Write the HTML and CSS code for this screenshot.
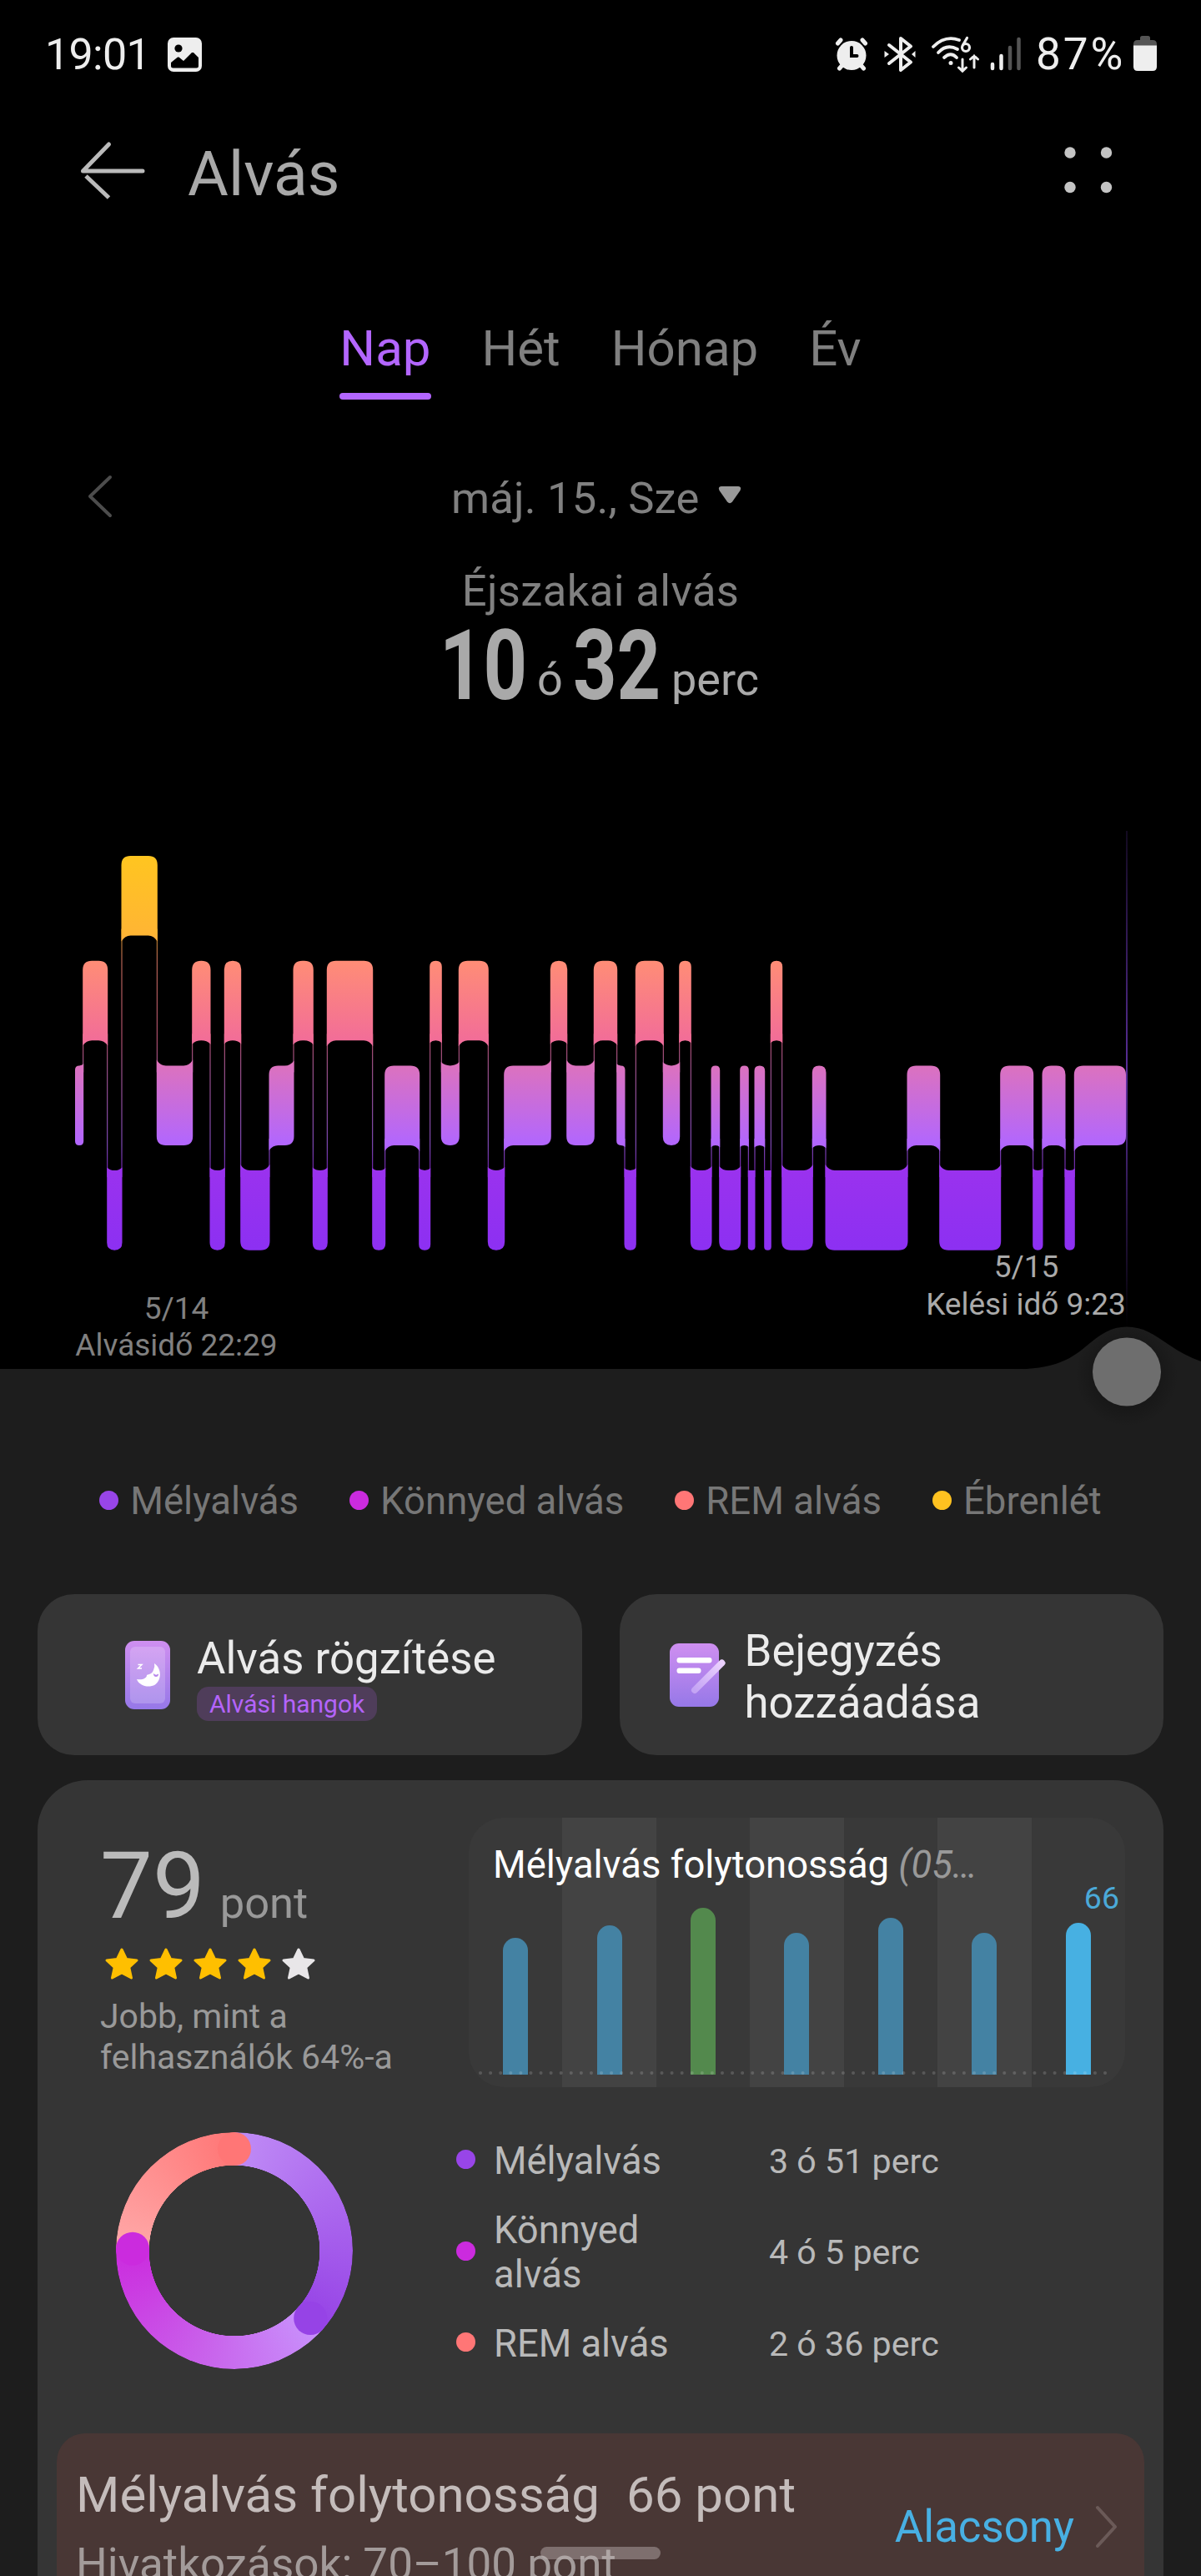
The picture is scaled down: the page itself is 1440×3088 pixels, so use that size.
FILE: index.html
```html
<!DOCTYPE html>
<html lang="hu">
<head>
  <meta charset="UTF-8" />
  <meta name="viewport" content="width=device-width, initial-scale=1.0" />
  <title>Alvás</title>
  <link rel="stylesheet" href="styles.css">
</head>
<body>
  <div class="screen">
    <div class="status-bar">
      <span class="clock">19:01</span>
      <svg class="icon-picture" width="41" height="41" viewBox="0 0 41 41">
        <rect width="41" height="41" rx="7" fill="#eee" />
        <circle cx="13" cy="13" r="4.6" fill="#000" />
        <path d="M4 30 L12 23.5 L13.5 23.5 L19 28 L29 18 L31 18 L37 24 V34 Q37 36.500 34.500 36.500 H6.500 Q4 36.500 4 34 Z" fill="#000" />
      </svg>
      <svg class="status-icons" width="226" height="44" viewBox="0 0 226 44">
        <!-- alarm -->
        <g stroke="#eee" fill="none" stroke-linecap="round" stroke-width="5">
          <circle cx="20" cy="23.500" r="17.500" fill="#eee" stroke="none" />
          <path d="M3.500 9 L7 5 M36.500 9 L33 5 M5.500 39 L9 35 M34.500 39 L31 35" />
          <path d="M20 14 V24 H26.500" stroke="#000" stroke-width="4" />
        </g>
        <!-- bluetooth -->
        <g stroke="#eee" fill="none" stroke-width="4" stroke-linecap="round" stroke-linejoin="round">
          <path d="M65 11 L91 31.500 L79 41 V3 L91 12.500 L65 33" />
          <path d="M59.500 18 L65 22 L59.500 26 Z M96.500 18 L92 22 L96.500 26 Z" fill="#eee" stroke="none" />
        </g>
        <!-- wifi 6 -->
        <g stroke="#eee" fill="none" stroke-width="3.800" stroke-linecap="round">
          <path d="M118 13 Q132 -1 149 5" />
          <path d="M124 20 Q134 9 147 16" />
          <path d="M131 26 Q139 18.500 146 26" />
          <circle cx="139" cy="32.500" r="2.500" fill="#eee" stroke="none" />
          <circle cx="157" cy="14" r="4.500" stroke-width="3.200" />
          <path d="M153.500 11 L158.500 2.500" stroke-width="3.200" />
          <path d="M153 28 V42 M148.500 38 L153 42.300 L157.500 38 M167 38 V24 M162.500 28 L167 24 L171.500 28" stroke-width="3" />
        </g>
        <!-- signal -->
        <g stroke-width="4.500" stroke-linecap="round">
          <path d="M189 34 V39 M199.500 24 V39" stroke="#eee" />
          <path d="M210 14 V39 M220.500 4 V39" stroke="#555" />
        </g>
      </svg>
      <span class="battery-text">87%</span>
      <svg width="28" height="42" viewBox="0 0 28 42">
        <path d="M8 2.500 Q8 0 10.500 0 H17.500 Q20 0 20 2.500 V5 H23 Q28 5 28 10 V12 H0 V10 Q0 5 5 5 H8 Z" fill="#555" />
        <path d="M0 11.500 H28 V37 Q28 42 23 42 H5 Q0 42 0 37 Z" fill="#eee" />
      </svg>
    </div>

    <div class="header">
      <svg class="back" width="80" height="72" viewBox="0 0 80 72" fill="none" stroke="#bbb" stroke-width="5" stroke-linecap="round">
        <path d="M76 36 H4.500 L35.500 4" stroke-linejoin="round" />
        <path d="M8 42 L35.500 68" stroke-linecap="butt" />
      </svg>
      <h1>Alvás</h1>
      <svg class="more" width="58" height="56" viewBox="0 0 58 56" fill="#c4c4c4">
        <circle cx="7" cy="7" r="6.700" />
        <circle cx="50.500" cy="7" r="6.700" />
        <circle cx="7" cy="48.500" r="6.700" />
        <circle cx="50.500" cy="48.500" r="6.700" />
      </svg>
    </div>

    <div class="tabs">
      <span class="tab active">Nap</span>
      <span class="tab">Hét</span>
      <span class="tab">Hónap</span>
      <span class="tab">Év</span>
    </div>

    <div class="date-row">
      <svg class="prev" width="30" height="52" viewBox="0 0 30 52" fill="none" stroke="#4c4c4c" stroke-width="4" stroke-linecap="round" stroke-linejoin="round">
        <path d="M27 3 L3 26 L27 49" />
      </svg>
      <span>máj. 15., Sze</span>
      <svg class="caret" width="28" height="21" viewBox="0 0 28 21">
        <path d="M4 0 H24 Q28.500 0.500 26.500 5 L17 18.500 Q14 22 11 18.500 L1.500 5 Q-0.500 0.500 4 0 Z" fill="#9a9a9a" />
      </svg>
    </div>

    <div class="summary-label">Éjszakai alvás</div>
    <div class="summary">
      <span class="num">10</span>
      <span class="unit">ó</span>
      <span class="num">32</span>
      <span class="unit">perc</span>
    </div>

    <svg class="sleep-chart" width="1440" height="784" viewBox="0 857 1440 784">
      <defs>
        <linearGradient id="stages" gradientUnits="userSpaceOnUse" x1="0" y1="1026" x2="0" y2="1499">
          <stop offset="0" stop-color="#ffc520" />
          <stop offset="0.2" stop-color="#ffb534" />
          <stop offset="0.266" stop-color="#ff8d76" />
          <stop offset="0.467" stop-color="#f26d98" />
          <stop offset="0.531" stop-color="#dc72be" />
          <stop offset="0.733" stop-color="#b166ff" />
          <stop offset="0.797" stop-color="#9a32ee" />
          <stop offset="1" stop-color="#8c30f2" />
        </linearGradient>
        <linearGradient id="marker" x1="0" y1="0" x2="0" y2="1">
          <stop offset="0" stop-color="#7a3fd0" stop-opacity="0.15" />
          <stop offset="0.5" stop-color="#7a3fd0" stop-opacity="0.75" />
          <stop offset="1" stop-color="#7a3fd0" stop-opacity="0" />
        </linearGradient>
        <radialGradient id="knobShadow">
          <stop offset="0.6" stop-color="#000" stop-opacity="0.2" />
          <stop offset="1" stop-color="#000" stop-opacity="0" />
        </radialGradient>
      </defs>
      <g id="bars" fill="url(#stages)"></g>
      <rect x="1350" y="996" width="2" height="594" fill="url(#marker)" />
      <g class="chart-label start" text-anchor="middle">
        <text x="211.500" y="1581">5/14</text>
        <text x="211.500" y="1625">Alvásidő 22:29</text>
      </g>
      <g class="chart-label end" text-anchor="middle">
        <text x="1230.500" y="1531">5/15</text>
        <text x="1230" y="1576">Kelési idő 9:23</text>
      </g>
      <path d="M1215 1641.500 C1252 1641 1277 1636 1302 1614 C1320 1599 1332 1590.500 1351 1590.500 C1371 1590.500 1384 1600 1400 1611 Q1420 1625 1440 1632 V1642 H1215 Z" fill="#1d1d1d" />
      <circle cx="1351" cy="1648" r="62" fill="url(#knobShadow)" />
      <circle cx="1351" cy="1644.500" r="41" fill="#6e6e6e" />
    </svg>

    <div class="sheet">
      <div class="legend">
        <span class="legend-item"><i class="dot deep"></i>Mélyalvás</span>
        <span class="legend-item"><i class="dot light"></i>Könnyed alvás</span>
        <span class="legend-item"><i class="dot rem"></i>REM alvás</span>
        <span class="legend-item"><i class="dot awake"></i>Ébrenlét</span>
      </div>

      <div class="actions">
        <div class="action record">
          <svg width="54" height="82" viewBox="0 0 54 82">
            <defs>
              <linearGradient id="lilac" x1="0" y1="0" x2="0" y2="1">
                <stop offset="0" stop-color="#cf8ff0" />
                <stop offset="1" stop-color="#9678e8" />
              </linearGradient>
            </defs>
            <rect width="54" height="82" rx="11" fill="url(#lilac)" />
            <rect x="6" y="7" width="42" height="68" rx="6" fill="#fff" fill-opacity="0.2" />
            <path d="M35 27 C44 33 44 47 36 52.500 C28 57 17 54 14 46 C21 47 26 45 26 41 C29 40 33 39 34 35 Q36 31 35 27 Z" fill="#fff" />
            <path d="M34 39 Q37 42 40 39.500 Q40 43 37 43 Q34 43 34 39 Z" fill="#b583ec" />
            <path d="M15.500 28.500 H20 L15.500 33 H20" fill="none" stroke="#fff" stroke-width="1.500" />
          </svg>
          <div class="action-text">
            <span>Alvás rögzítése</span>
            <span class="tag">Alvási hangok</span>
          </div>
        </div>
        <div class="action note">
          <svg width="68" height="76" viewBox="0 0 68 76">
            <defs>
              <linearGradient id="pen" x1="1" y1="0" x2="0" y2="1">
                <stop offset="0" stop-color="#ecd2ff" />
                <stop offset="1" stop-color="#c4a4f4" />
              </linearGradient>
            </defs>
            <rect width="59" height="76" rx="11" fill="url(#lilac)" />
            <rect x="8.500" y="17" width="42" height="6.500" rx="3" fill="#fff" />
            <rect x="8.500" y="29.500" width="29" height="6.500" rx="3" fill="#fff" />
            <path d="M30 56 L62.500 23.500" stroke="url(#pen)" stroke-width="8" stroke-linecap="round" />
          </svg>
          <div class="action-text">Bejegyzés<br>hozzáadása</div>
        </div>
      </div>

      <div class="card">
        <div class="card-row">
          <div class="score">
            <div class="score-value">79 <small>pont</small></div>
            <div class="stars" id="stars"></div>
            <p>Jobb, mint a<br>felhasználók 64%-a</p>
          </div>
          <div class="trend">
            <div class="trend-title">Mélyalvás folytonosság <em>(05…</em></div>
            <span class="trend-value">66</span>
            <div class="trend-cols" id="trend"></div>
            <svg class="trend-axis" width="764" height="4" viewBox="0 0 764 4">
              <path d="M2 2 H762" stroke="#fff" stroke-opacity="0.16" stroke-width="4" stroke-linecap="round" stroke-dasharray="0.1 11.980" />
            </svg>
          </div>
        </div>

        <div class="card-row stages-row">
          <div class="ring">
            <svg width="284" height="284" viewBox="0 0 284 284">
              <circle cx="233.200" cy="223" r="20" fill="#9643e6" />
              <circle cx="20" cy="139.700" r="20" fill="#cb2bde" />
              <circle cx="142" cy="20" r="20" fill="#ff7676" />
            </svg>
          </div>
          <div class="stage-list">
            <div class="stage"><i class="dot deep"></i><span class="name">Mélyalvás</span><span class="time">3 ó 51 perc</span></div>
            <div class="stage"><i class="dot light"></i><span class="name">Könnyed alvás</span><span class="time">4 ó 5 perc</span></div>
            <div class="stage"><i class="dot rem"></i><span class="name">REM alvás</span><span class="time">2 ó 36 perc</span></div>
          </div>
        </div>

        <div class="notice">
          <div class="notice-text">
            <div class="notice-title">Mélyalvás folytonosság<span>66 pont</span></div>
            <div class="notice-sub">Hivatkozások: 70–100 pont</div>
          </div>
          <div class="notice-level">
            Alacsony
            <svg width="28" height="52" viewBox="0 0 28 52" fill="none" stroke="#6b5a58" stroke-width="4" stroke-linecap="round" stroke-linejoin="round">
              <path d="M3 3 L24 26 L3 49" />
            </svg>
          </div>
        </div>
      </div>
    </div>

    <div class="home-bar"></div>
  </div>

  <script>
    const SVG_NS = 'http://www.w3.org/2000/svg';

    // Sleep stages: [end x, level], 0 = awake, 1 = REM, 2 = light, 3 = deep
    const segments = [
      [99.7, 2], [128.7, 1], [146, 3], [188.3, 0], [230.7, 2], [252, 1], [269.3, 3], [288.7, 1],
      [323, 3], [352, 2], [375.3, 1], [392.3, 3], [446.7, 1], [461.7, 3], [502.7, 2], [515.7, 3],
      [529.3, 1], [550.3, 2], [585.3, 1], [604.7, 3], [660.3, 2], [679.7, 1], [712.3, 2], [739.7, 1],
      [749, 2], [762.3, 3], [795.3, 1], [814.7, 2], [828.3, 1], [853, 3], [862.7, 2], [887.7, 3],
      [897.3, 2], [905, 3], [916.7, 2], [924.3, 3], [937.7, 1], [974.3, 3], [990, 2], [1088, 3],
      [1126.7, 2], [1199.7, 3], [1238.7, 2], [1250, 3], [1277, 2], [1288.3, 3], [1350, 2]
    ];
    const levelTop = level => 1026 + level * 125.7;
    const barHeight = 95.6;
    const bars = document.getElementById('bars');

    let x0 = 90;
    segments.forEach(([x1, level], i) => {
      const prev = i > 0 ? segments[i - 1][1] : null;
      const next = i < segments.length - 1 ? segments[i + 1][1] : null;
      const l = prev === null ? x0 : x0 - 0.5;
      const r = next === null ? x1 : x1 + 0.5;
      const w = r - l;
      const rad = Math.min(11, w / 2);
      const flare = w < 9 ? 0 : Math.min(7, w / 5);
      const top = levelTop(level);
      const bottom = top + barHeight;

      // corners that face a neighbour flare out, the others are rounded
      const corner = (neighbour, up) => {
        if (neighbour === null) return rad;
        return (up ? neighbour < level : neighbour > level) ? -flare : rad;
      };
      const tl = corner(prev, true), tr = corner(next, true);
      const bl = corner(prev, false), br = corner(next, false);

      const path = document.createElementNS(SVG_NS, 'path');
      path.setAttribute('d',
        `M${l} ${top + tl} Q${l + (tl < 0 ? rad * 0.4 : 0)} ${top} ${l + rad} ${top}` +
        ` H${r - rad} Q${r - (tr < 0 ? rad * 0.4 : 0)} ${top} ${r} ${top + tr}` +
        ` V${bottom - br} Q${r - (br < 0 ? rad * 0.4 : 0)} ${bottom} ${r - rad} ${bottom}` +
        ` H${l + rad} Q${l + (bl < 0 ? rad * 0.4 : 0)} ${bottom} ${l} ${bottom - bl} Z`);
      bars.appendChild(path);

      if (next !== null) {
        const line = document.createElementNS(SVG_NS, 'rect');
        const from = levelTop(Math.min(level, next)) + barHeight - 8;
        const to = levelTop(Math.max(level, next)) + 8;
        line.setAttribute('x', x1 - 0.5);
        line.setAttribute('y', from);
        line.setAttribute('width', 1);
        line.setAttribute('height', to - from);
        line.setAttribute('opacity', 0.85);
        bars.appendChild(line);
      }
      x0 = x1;
    });

    // Stars
    const stars = document.getElementById('stars');
    for (let i = 0; i < 5; i++) {
      const color = i < 4 ? '#ffbf00' : '#e8e6e8';
      stars.innerHTML += `
        <svg width="42" height="40" viewBox="0 0 42 40">
          <path d="M21 3 L26.500 14.500 L39 16 L29.800 24.500 L32.500 37 L21 31 L9.500 37 L12.200 24.500 L3 16 L15.500 14.500 Z"
            fill="${color}" stroke="${color}" stroke-width="3" stroke-linejoin="round" />
        </svg>`;
    }

    // Last seven days
    const days = [164, 179, 200, 170, 188, 170, 182];
    document.getElementById('trend').innerHTML = days.map((h, i) => {
      const type = i === 2 ? 'good' : i === 6 ? 'today' : '';
      return `<div class="trend-col"><div class="trend-bar ${type}" style="height:${h}px"></div></div>`;
    }).join('');
  </script>
</body>
</html>
```
FILE: styles.css
```css
* {
  box-sizing: border-box;
}

body {
  margin: 0;
  background: #000;
  font-family: Roboto, sans-serif;
  color: #808080;
}

svg {
  display: block;
  flex: none;
}

.screen {
  position: relative;
  width: 1440px;
  height: 3088px;
  overflow: hidden;
}

/* status bar */
.status-bar {
  display: flex;
  align-items: center;
  height: 130px;
  padding: 0 53px 0 54px;
  font-size: 52px;
  color: #eee;
}

.clock {
  width: 147px;
  letter-spacing: -0.7px;
}

.status-icons {
  margin-left: auto;
}

.battery-text {
  width: 115px;
  margin-left: 15px;
  font-size: 53px;
  letter-spacing: 3px;
}

.battery-text + svg {
  margin-left: 2px;
  margin-bottom: 2px;
}

/* header */
.header {
  display: flex;
  align-items: center;
  height: 156px;
  padding: 0 106px 0 95px;
}

.back {
  margin-bottom: 6px;
}

h1 {
  margin: 0 auto 0 50px;
  font-size: 75px;
  font-weight: 400;
  color: #a9a9a9;
}

.more {
  margin-bottom: 8px;
}

/* tabs */
.tabs {
  display: flex;
  justify-content: center;
  gap: 61px;
  margin-top: 97px;
  font-size: 60px;
  line-height: 70px;
}

.tab {
  height: 96px;
}

.tab.active {
  color: #b366ff;
}

.tab.active::after {
  content: "";
  display: block;
  height: 8px;
  margin-top: 18px;
  border-radius: 4px;
  background: #b366ff;
}

.date-row {
  display: flex;
  align-items: center;
  height: 60px;
  margin-top: 88px;
  padding-left: 105px;
  font-size: 52.5px;
  letter-spacing: 0.2px;
}

.date-row span {
  width: 321px;
  margin-left: 406px;
  white-space: nowrap;
}

.date-row .caret {
  margin-left: -1px;
}

.prev {
  margin-bottom: 5px;
}

.caret {
  margin-bottom: 7px;
}

.summary-label {
  margin-top: 51px;
  font-size: 52.5px;
  line-height: 60px;
  letter-spacing: 0.4px;
  text-align: center;
}

.summary {
  display: flex;
  align-items: baseline;
  height: 119px;
  padding-left: 527px;
  line-height: 119px;
  color: #a9a9a9;
}

.num {
  width: 117px;
  font-size: 116px;
  font-weight: 700;
  white-space: nowrap;
  transform: translateY(1px) scaleX(0.79);
  transform-origin: left;
}

.unit {
  width: 43px;
  font-size: 54px;
  transform: translateY(-4px);
}

.unit:last-child {
  margin-left: 1px;
}

/* sleep chart */
.sleep-chart {
  position: relative;
  overflow: visible;
  z-index: 1;
}

.chart-label {
  font-size: 37px;
}

.chart-label.start {
  fill: #808080;
}

.chart-label.end {
  fill: #aaa;
}

/* sheet */
.sheet {
  padding: 129px 45px 0;
  background: #1d1d1d;
}

.legend {
  display: flex;
  justify-content: center;
  gap: 61px;
  font-size: 45.5px;
  line-height: 60px;
  color: #777;
}

.legend-item {
  display: flex;
  align-items: center;
  gap: 14px;
  white-space: nowrap;
}

.dot {
  flex: none;
  width: 23px;
  height: 23px;
  margin-bottom: 4px;
  border-radius: 50%;
}

.deep {
  background: #9845e8;
}

.light {
  background: #cb2bde;
}

.rem {
  background: #ff7676;
}

.awake {
  background: #ffc220;
}

.actions {
  display: grid;
  grid-template-columns: 1fr 1fr;
  gap: 45px;
  height: 193px;
  margin-top: 81px;
}

.action {
  display: flex;
  align-items: center;
  border-radius: 44px;
  background: #353535;
  font-size: 52.8px;
  line-height: 62px;
  color: #ebebeb;
}

.record {
  padding-left: 105px;
}

.record .action-text {
  display: flex;
  flex-direction: column;
  align-items: flex-start;
  margin: 5px 0 0 32px;
}

.tag {
  margin-top: 3px;
  padding: 0 15px;
  border-radius: 14px;
  background: #4f3d5a;
  font-size: 30px;
  line-height: 41px;
  color: #b464fa;
}

.note {
  padding-left: 60px;
}

.note .action-text {
  margin: 5px 0 0 22px;
}

.card {
  height: 1000px;
  margin-top: 30px;
  padding: 45px 23px 0;
  border-radius: 60px 60px 0 0;
  background: #353535;
}

.card-row {
  display: flex;
}

.score {
  width: 494px;
  padding: 26px 0 0 52px;
  color: #999;
}

.score-value {
  height: 112px;
  font-size: 112px;
  line-height: 112px;
  color: #bbb;
  white-space: nowrap;
}

.score-value small {
  margin-left: -10px;
  font-size: 52.5px;
  line-height: 1;
  color: #999;
}

.stars {
  display: flex;
  gap: 11px;
  margin: 17px 0 0 5px;
}

.score p {
  margin: 19px 0 0;
  font-size: 41px;
  line-height: 49px;
}

/* weekly trend */
.trend {
  position: relative;
  width: 787px;
  height: 323px;
  border-radius: 42px;
  overflow: hidden;
}

.trend-cols {
  display: flex;
  height: 100%;
}

.trend-col {
  display: flex;
  flex: 1;
  align-items: flex-end;
  justify-content: center;
  padding-bottom: 15px;
  background: #393939;
}

.trend-col:nth-child(even) {
  background: #434343;
}

.trend-bar {
  width: 30px;
  border-radius: 15px 15px 0 0;
  background: #4482a3;
}

.trend-bar.good {
  background: #53894d;
}

.trend-bar.today {
  background: #47b0e2;
}

.trend-title {
  position: absolute;
  left: 29px;
  top: 30px;
  font-size: 45.4px;
  line-height: 53px;
  color: #fff;
  white-space: nowrap;
}

.trend-title em {
  color: #999;
}

.trend-value {
  position: absolute;
  right: 7px;
  top: 74px;
  font-size: 37.5px;
  line-height: 44px;
  color: #4ba9d8;
}

.trend-axis {
  position: absolute;
  left: 12px;
  bottom: 15px;
}

/* stages */
.stages-row {
  margin-top: 54px;
}

.ring {
  position: relative;
  width: 284px;
  height: 284px;
  margin-left: 71px;
}

.ring::before {
  content: "";
  position: absolute;
  inset: 0;
  border-radius: 50%;
  background: conic-gradient(
    #c08cf6 0deg, #9643e6 131.6deg,
    #c892fc 131.6deg, #c95fea 200deg, #cb2bde 271.1deg,
    #ffa8a8 271.1deg, #ff7676 360deg);
  -webkit-mask: radial-gradient(circle, transparent 102px, #000 102.5px);
  mask: radial-gradient(circle, transparent 102px, #000 102.5px);
}

.ring svg {
  position: relative;
}

.stage-list {
  display: flex;
  flex-direction: column;
  gap: 30px;
  margin: 8px 0 0 124px;
  color: #b9b9b9;
}

.stage {
  display: flex;
  align-items: center;
}

.name {
  width: 250px;
  margin-left: 22px;
  margin-right: 80px;
  padding-right: 30px;
  font-size: 45.3px;
  line-height: 53px;
}

.time {
  font-size: 41.2px;
}

/* notice */
.notice {
  display: flex;
  justify-content: space-between;
  height: 300px;
  margin-top: 77px;
  padding: 39px 31px 0 23px;
  border-radius: 34px;
  background: #493735;
}

.notice-title {
  font-size: 60px;
  line-height: 70px;
  color: #c4bcbb;
}

.notice-title span {
  margin-left: 32px;
}

.notice-sub {
  margin-top: 18px;
  font-size: 53px;
  line-height: 61px;
  color: #a39b9a;
}

.notice-level {
  display: flex;
  align-items: center;
  gap: 25px;
  height: 62px;
  margin-top: 42px;
  font-size: 52.8px;
  color: #48b0e3;
}

.home-bar {
  position: absolute;
  left: 648px;
  bottom: 20px;
  z-index: 2;
  width: 144px;
  height: 15px;
  border-radius: 8px;
  background: rgba(190, 180, 180, 0.45);
}
```
